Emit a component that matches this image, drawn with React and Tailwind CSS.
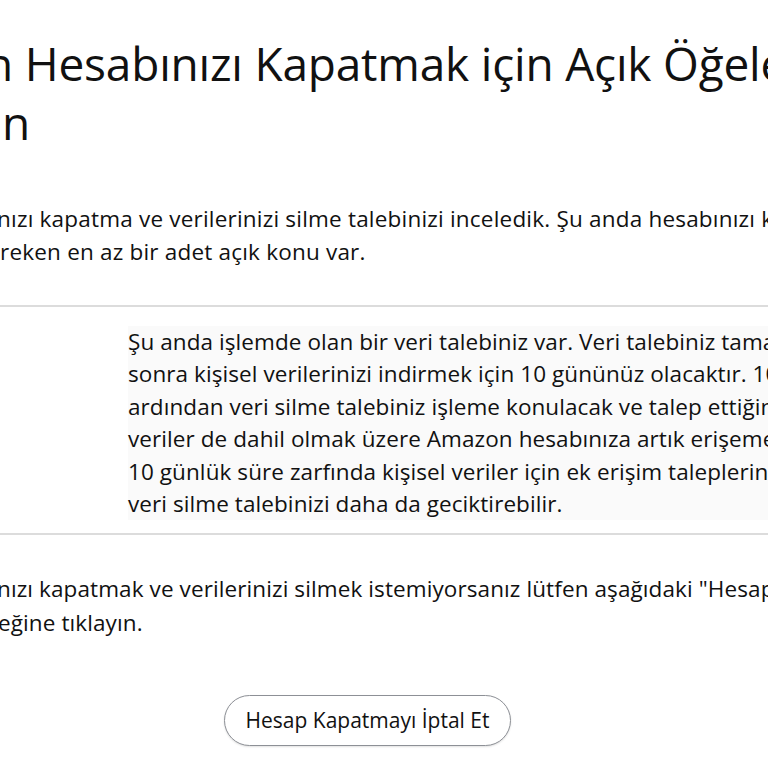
const boxLines = [
  "Şu anda işlemde olan bir veri talebiniz var. Veri talebiniz tamamlandıktan",
  "sonra kişisel verilerinizi indirmek için 10 gününüz olacaktır. 10 günün",
  "ardından veri silme talebiniz işleme konulacak ve talep ettiğiniz",
  "veriler de dahil olmak üzere Amazon hesabınıza artık erişemeyeceksiniz.",
  "10 günlük süre zarfında kişisel veriler için ek erişim taleplerinde bulunmak",
  "veri silme talebinizi daha da geciktirebilir.",
];

const App = () => {
  return (
    <div className="w-[768px] h-[768px] overflow-hidden bg-white text-[#111] font-['Open_Sans',sans-serif]">
      <h1 className="mt-[34px] text-[46px] leading-[59px] font-normal tracking-[-0.2px] whitespace-nowrap">
        <div className="ml-[-15px]">n Hesabınızı Kapatmak için Açık Öğeleri</div>
        <div className="ml-[2px]">n</div>
      </h1>

      <div className="mt-[50px] text-[22.5px] leading-[33px] tracking-[0.2px] whitespace-nowrap">
        <div className="ml-[-3px]">nızı kapatma ve verilerinizi silme talebinizi inceledik. Şu anda hesabınızı kapatmadan</div>
        <div>reken en az bir adet açık konu var.</div>
      </div>

      <div className="mt-[37px] border-t-2 border-[#dcdcdc]">
        <div className="pt-[19px] pb-[13px] pl-[128px] text-[22.5px] leading-[32.4px] tracking-[0.08px] whitespace-nowrap">
          <div className="bg-[#fafafa]">
            {boxLines.map((line) => (
              <div key={line}>{line}</div>
            ))}
          </div>
        </div>
      </div>

      <div className="border-t-2 border-[#dcdcdc]">
        <div className="pt-[37px] text-[22.5px] leading-[34px] tracking-[0.1px] whitespace-nowrap">
          <div className="ml-[-3px]">nızı kapatmak ve verilerinizi silmek istemiyorsanız lütfen aşağıdaki "Hesap Kapatmayı İptal Et"</div>
          <div className="ml-[-2px]">eğine tıklayın.</div>
        </div>
      </div>

      <div className="mt-[55px] ml-[224px]">
        <button className="w-[287px] h-[51px] rounded-full border border-[#8d9096] bg-white text-[21px] text-[#111] shadow-[0_1px_2px_rgba(0,0,0,0.12)]">
          Hesap Kapatmayı İptal Et
        </button>
      </div>
    </div>
  );
};

export default App;
